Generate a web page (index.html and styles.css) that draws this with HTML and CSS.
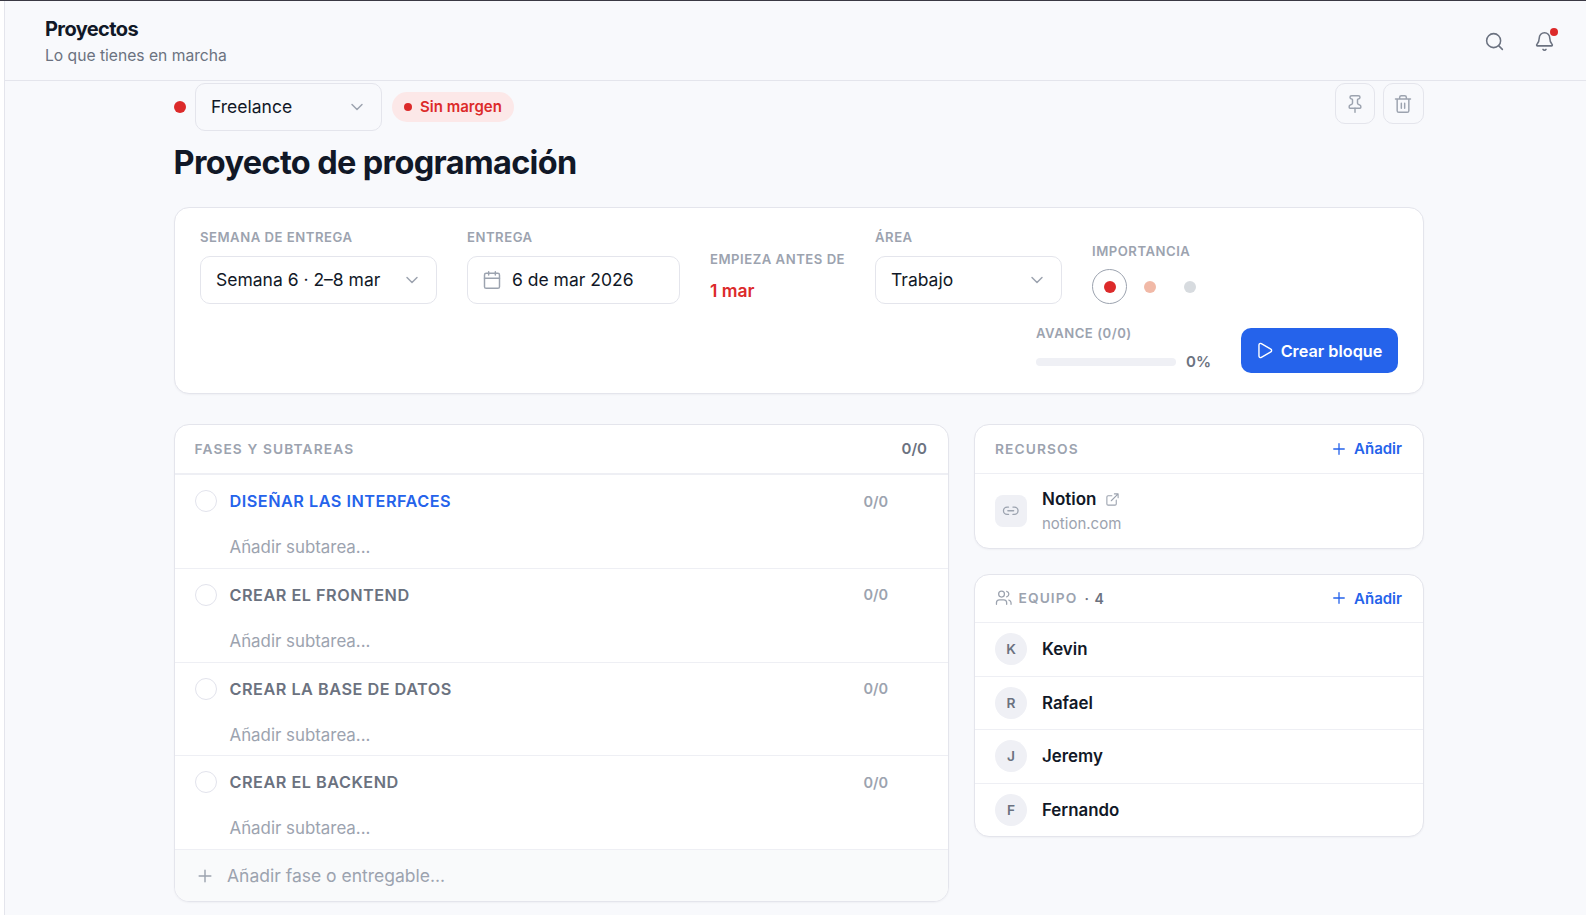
FILE: index.html
```html
<!DOCTYPE html>
<html lang="es">
<head>
    <meta charset="UTF-8">
    <meta name="viewport" content="width=device-width, initial-scale=1.0">
    <title>Proyectos</title>
    <link rel="stylesheet" href="styles.css">
</head>
<body>
    <svg class="sprite" aria-hidden="true">
        <symbol id="chevron" viewBox="0 0 24 24"><path d="m6 9 6 6 6-6"/></symbol>
        <symbol id="plus" viewBox="0 0 24 24"><path d="M5 12h14M12 5v14"/></symbol>
    </svg>

    <div class="app">
        <header class="topbar">
            <div>
                <h1>Proyectos</h1>
                <p>Lo que tienes en marcha</p>
            </div>
            <div class="topbar-actions">
                <button class="icon-button" aria-label="Buscar">
                    <svg class="icon" viewBox="0 0 24 24"><circle cx="11" cy="11" r="8"/><path d="m21 21-4.3-4.3"/></svg>
                </button>
                <button class="icon-button" aria-label="Notificaciones">
                    <svg class="icon" viewBox="0 0 24 24"><path d="M10.268 21a2 2 0 0 0 3.464 0"/><path d="M3.262 15.326A1 1 0 0 0 4 17h16a1 1 0 0 0 .74-1.673C19.41 13.956 18 12.499 18 8A6 6 0 0 0 6 8c0 4.499-1.411 5.956-2.738 7.326"/></svg>
                    <span class="badge"></span>
                </button>
            </div>
        </header>

        <main>
            <div class="project-bar">
                <span class="dot red"></span>
                <button class="select client">Freelance <svg class="icon"><use href="#chevron"/></svg></button>
                <span class="pill">Sin margen</span>
                <div class="project-actions">
                    <button class="square-button" aria-label="Fijar">
                        <svg class="icon" viewBox="0 0 24 24"><path d="M12 17v5"/><path d="M9 10.76a2 2 0 0 1-1.11 1.79l-1.78.9A2 2 0 0 0 5 15.24V16a1 1 0 0 0 1 1h12a1 1 0 0 0 1-1v-.76a2 2 0 0 0-1.11-1.79l-1.78-.9A2 2 0 0 1 15 10.76V7a1 1 0 0 1 1-1 2 2 0 0 0 0-4H8a2 2 0 0 0 0 4 1 1 0 0 1 1 1z"/></svg>
                    </button>
                    <button class="square-button" aria-label="Eliminar">
                        <svg class="icon" viewBox="0 0 24 24"><path d="M3 6h18M19 6v14a2 2 0 0 1-2 2H7a2 2 0 0 1-2-2V6M8 6V4a2 2 0 0 1 2-2h4a2 2 0 0 1 2 2v2M10 11v6M14 11v6"/></svg>
                    </button>
                </div>
            </div>

            <h2>Proyecto de programación</h2>

            <section class="card details">
                <div class="field">
                    <span class="label">Semana de entrega</span>
                    <button class="select week">Semana 6 · 2–8 mar <svg class="icon"><use href="#chevron"/></svg></button>
                </div>
                <div class="field">
                    <span class="label">Entrega</span>
                    <button class="select date">
                        <svg class="icon calendar" viewBox="0 0 24 24"><path d="M8 2v4M16 2v4M3 10h18"/><rect x="3" y="4" width="18" height="18" rx="2"/></svg>
                        6 de mar 2026
                    </button>
                </div>
                <div class="field start">
                    <span class="label">Empieza antes de</span>
                    <strong>1 mar</strong>
                </div>
                <div class="field">
                    <span class="label">Área</span>
                    <button class="select area">Trabajo <svg class="icon"><use href="#chevron"/></svg></button>
                </div>
                <div class="field priority">
                    <span class="label">Importancia</span>
                    <div class="priority-options">
                        <button class="selected" aria-label="Alta"><span class="dot red"></span></button>
                        <button aria-label="Media"><span class="dot peach"></span></button>
                        <button aria-label="Baja"><span class="dot gray"></span></button>
                    </div>
                </div>
                <div class="progress-group">
                    <div class="progress">
                        <span class="label">Avance (0/0)</span>
                        <div class="progress-line"><div class="track"></div><span>0%</span></div>
                    </div>
                    <button class="primary">
                        <svg class="icon" viewBox="0 0 24 24"><path d="M5 5a2 2 0 0 1 3.008-1.728l11.997 6.998a2 2 0 0 1 .003 3.458l-12 7A2 2 0 0 1 5 19z"/></svg>
                        Crear bloque
                    </button>
                </div>
            </section>

            <div class="columns">
                <section class="card phases">
                    <div class="card-header">
                        <h3>Fases y subtareas</h3>
                        <span class="total">0/0</span>
                    </div>
                    <div class="phase active">
                        <div class="phase-row"><span class="check"></span><span class="phase-name">Diseñar las interfaces</span><span class="count">0/0</span></div>
                        <p>Añadir subtarea...</p>
                    </div>
                    <div class="phase">
                        <div class="phase-row"><span class="check"></span><span class="phase-name">Crear el frontend</span><span class="count">0/0</span></div>
                        <p>Añadir subtarea...</p>
                    </div>
                    <div class="phase">
                        <div class="phase-row"><span class="check"></span><span class="phase-name">Crear la base de datos</span><span class="count">0/0</span></div>
                        <p>Añadir subtarea...</p>
                    </div>
                    <div class="phase">
                        <div class="phase-row"><span class="check"></span><span class="phase-name">Crear el backend</span><span class="count">0/0</span></div>
                        <p>Añadir subtarea...</p>
                    </div>
                    <div class="new-phase"><svg class="icon"><use href="#plus"/></svg><span>Añadir fase o entregable...</span></div>
                </section>

                <aside>
                    <section class="card">
                        <div class="card-header">
                            <h3>Recursos</h3>
                            <button class="add"><svg class="icon"><use href="#plus"/></svg>Añadir</button>
                        </div>
                        <div class="resource">
                            <span class="resource-icon"><svg class="icon" viewBox="0 0 24 24"><path d="M9 17H7A5 5 0 0 1 7 7h2M15 7h2a5 5 0 1 1 0 10h-2M8 12h8"/></svg></span>
                            <div>
                                <div class="resource-name">Notion <svg class="icon" viewBox="0 0 24 24"><path d="M15 3h6v6M10 14 21 3M18 13v6a2 2 0 0 1-2 2H5a2 2 0 0 1-2-2V8a2 2 0 0 1 2-2h6"/></svg></div>
                                <div class="resource-url">notion.com</div>
                            </div>
                        </div>
                    </section>

                    <section class="card team">
                        <div class="card-header">
                            <svg class="icon" viewBox="0 0 24 24"><path d="M16 21v-2a4 4 0 0 0-4-4H6a4 4 0 0 0-4 4v2"/><circle cx="9" cy="7" r="4"/><path d="M22 21v-2a4 4 0 0 0-3-3.87M16 3.13a4 4 0 0 1 0 7.75"/></svg>
                            <h3>Equipo</h3>
                            <span class="team-count">· 4</span>
                            <button class="add"><svg class="icon"><use href="#plus"/></svg>Añadir</button>
                        </div>
                        <div class="member"><span class="avatar">K</span>Kevin</div>
                        <div class="member"><span class="avatar">R</span>Rafael</div>
                        <div class="member"><span class="avatar">J</span>Jeremy</div>
                        <div class="member"><span class="avatar">F</span>Fernando</div>
                    </section>
                </aside>
            </div>
        </main>
    </div>
</body>
</html>
```
FILE: styles.css
```css
:root {
    --bg: #f8f9fc;
    --card: #ffffff;
    --text: #111827;
    --text-soft: #6b7280;
    --muted: #9ca3af;
    --border: #e4e5ec;
    --line: #eeeff4;
    --accent: #2563eb;
    --danger: #dc2a2a;
}

* {
    box-sizing: border-box;
}

body {
    margin: 0;
    height: 915px;
    overflow: hidden;
    font-family: 'Inter', sans-serif;
    font-size: 17.5px;
    color: var(--text);
    background-color: var(--card);
    border-top: 1px solid #3a3944;
    padding-left: 4px;
}

h1, h2, h3, p {
    margin: 0;
}

button {
    font: inherit;
    color: inherit;
    background: none;
    border: none;
    padding: 0;
    cursor: pointer;
}

.sprite {
    display: none;
}

.icon {
    display: block;
    width: 20px;
    height: 20px;
    flex: none;
    fill: none;
    stroke: currentColor;
    stroke-width: 1.75;
    stroke-linecap: round;
    stroke-linejoin: round;
}

.app {
    height: 100%;
    background-color: var(--bg);
    border-left: 1px solid var(--border);
}

.topbar {
    display: flex;
    align-items: center;
    justify-content: space-between;
    height: 80px;
    padding: 2px 19px 0 40px;
    border-bottom: 1px solid var(--border);
}

.topbar h1 {
    margin-top: 2px;
    font-size: 20px;
    line-height: 25px;
    font-weight: 700;
    letter-spacing: -0.6px;
}

.topbar p {
    margin-top: 2px;
    font-size: 15.65px;
    line-height: 24px;
    color: var(--text-soft);
}

.topbar-actions {
    display: flex;
    gap: 5px;
    color: var(--text-soft);
}

.icon-button {
    position: relative;
    display: grid;
    place-items: center;
    width: 45px;
    height: 45px;
}

.icon-button .icon {
    width: 21px;
    height: 21px;
}

.badge {
    position: absolute;
    top: 9px;
    right: 9px;
    width: 8px;
    height: 8px;
    border-radius: 50%;
    background-color: var(--danger);
}

main {
    width: 1250px;
    margin-left: 169px;
    padding-top: 2px;
}

.project-bar {
    display: flex;
    align-items: center;
    gap: 10px;
    height: 48px;
}

.dot {
    display: block;
    width: 12px;
    height: 12px;
    border-radius: 50%;
}

.project-bar .dot {
    margin-right: -1px;
}

.red {
    background-color: var(--danger);
}

.peach {
    background-color: #f1b9a7;
}

.gray {
    background-color: #d7dbdf;
}

.select {
    display: flex;
    align-items: center;
    justify-content: space-between;
    height: 48px;
    padding: 0 14px 1px 15px;
    border: 1px solid var(--border);
    border-radius: 10px;
    white-space: nowrap;
}

.select .icon {
    color: var(--muted);
}

.client, .area {
    width: 187px;
}

.week {
    width: 237px;
}

.date {
    width: 213px;
    justify-content: flex-start;
    gap: 10px;
    padding-left: 14px;
}

.pill {
    display: flex;
    align-items: center;
    gap: 8px;
    height: 30px;
    padding: 0 12px 1px;
    border-radius: 15px;
    font-size: 15px;
    font-weight: 600;
    color: var(--danger);
    background-color: #fce8e8;
}

.pill::before {
    content: "";
    width: 8px;
    height: 8px;
    border-radius: 50%;
    background-color: var(--danger);
}

.project-actions {
    display: flex;
    align-self: flex-start;
    gap: 8px;
    margin-left: auto;
}

.square-button {
    display: grid;
    place-items: center;
    width: 40px;
    height: 41px;
    border: 1px solid var(--border);
    border-radius: 10px;
    color: var(--muted);
}

.square-button:last-child {
    width: 41px;
    padding-right: 1px;
}

h2 {
    margin-top: 10px;
    font-size: 32.5px;
    line-height: 43px;
    font-weight: 700;
    letter-spacing: -0.65px;
    text-indent: -0.5px;
}

.card {
    background-color: var(--card);
    border: 1px solid var(--border);
    border-radius: 15px;
    box-shadow: 0 1px 2px rgba(17, 24, 39, 0.04);
    overflow: hidden;
}

.details {
    display: flex;
    flex-wrap: wrap;
    align-items: flex-end;
    gap: 24px 30px;
    margin-top: 23px;
    height: 187px;
    padding: 20px 25px;
}

.label {
    display: block;
    font-size: 13.125px;
    line-height: 18px;
    font-weight: 600;
    letter-spacing: 0.52px;
    text-transform: uppercase;
    white-space: nowrap;
    color: var(--muted);
}

.field .select {
    margin-top: 10px;
}

.start {
    width: 135px;
}

.start strong {
    display: block;
    margin-top: 9px;
    line-height: 27px;
    font-weight: 600;
    color: var(--danger);
}

.priority-options {
    display: flex;
    gap: 5px;
    margin-top: 9px;
}

.priority-options button {
    display: grid;
    place-items: center;
    width: 35px;
    height: 35px;
    border: 1px solid transparent;
    border-radius: 50%;
}

.priority-options .selected {
    border-color: var(--muted);
}

.progress-group {
    display: flex;
    gap: 30px;
    margin-left: auto;
}

.progress {
    margin-top: -4px;
}

.progress-line {
    display: flex;
    align-items: center;
    gap: 10px;
    margin-top: 9px;
    width: 175px;
    font-size: 15px;
    line-height: 22px;
    font-weight: 600;
    color: var(--text-soft);
}

.track {
    flex: none;
    width: 140px;
    height: 8px;
    border-radius: 4px;
    background-color: #eff0f5;
}

.primary {
    display: flex;
    align-items: center;
    justify-content: center;
    gap: 7px;
    width: 157px;
    height: 45px;
    padding-right: 2px;
    border-radius: 10px;
    font-size: 16.25px;
    font-weight: 600;
    color: #fff;
    background-color: var(--accent);
    white-space: nowrap;
}

.primary .icon {
    width: 19px;
    height: 19px;
}

.columns {
    display: grid;
    grid-template-columns: 775px 450px;
    align-items: start;
    gap: 25px;
    margin-top: 30px;
}

.card-header {
    display: flex;
    align-items: center;
    height: 49px;
    padding: 0 21px 1px 20px;
    border-bottom: 1px solid var(--line);
}

.card-header h3 {
    font-size: 13.75px;
    font-weight: 600;
    letter-spacing: 1.1px;
    text-transform: uppercase;
    color: var(--muted);
}

.phases .card-header {
    height: 50px;
    border-bottom-width: 2px;
}

.phases .card-header h3 {
    margin-left: -0.5px;
}

.total {
    margin-left: auto;
    font-size: 15px;
    font-weight: 600;
    color: var(--text-soft);
}

.phase {
    height: 93.75px;
    padding-top: 11px;
    border-bottom: 1px solid var(--line);
}

.phase-row {
    display: flex;
    align-items: center;
    height: 30px;
    padding: 0 60px 0 20px;
}

.check {
    width: 22px;
    height: 22px;
    margin-right: 12.5px;
    border: 1px solid #e2e3ec;
    border-radius: 50%;
}

.phase-name {
    font-size: 16.25px;
    font-weight: 600;
    letter-spacing: 0.5px;
    text-transform: uppercase;
    color: var(--text-soft);
}

.active .phase-name {
    color: var(--accent);
}

.count {
    margin-left: auto;
    font-size: 14.5px;
    font-weight: 600;
    color: var(--muted);
}

.phase p {
    margin: 19px 0 0 54.5px;
    font-size: 16.875px;
    line-height: 24px;
    color: var(--muted);
}

.new-phase {
    display: flex;
    align-items: center;
    gap: 12px;
    height: 51px;
    padding-left: 20px;
    color: var(--muted);
    background-color: #f9fafb;
}

aside {
    display: grid;
    gap: 25px;
}

.add {
    display: flex;
    align-items: center;
    gap: 6px;
    margin-left: auto;
    font-size: 15px;
    font-weight: 600;
    color: var(--accent);
}

.add .icon {
    width: 18px;
    height: 18px;
}

.resource {
    display: flex;
    align-items: center;
    gap: 15px;
    height: 74px;
    padding: 0 20px;
}

.resource-icon {
    display: grid;
    place-items: center;
    width: 32px;
    height: 32px;
    border-radius: 8px;
    color: var(--muted);
    background-color: #eff0f5;
}

.resource-icon .icon {
    width: 17.5px;
    height: 17.5px;
}

.resource-name {
    display: flex;
    align-items: center;
    gap: 9px;
    font-size: 17px;
    line-height: 25px;
    font-weight: 600;
}

.resource-name .icon {
    width: 15px;
    height: 15px;
    color: var(--muted);
}

.resource-url {
    font-size: 15px;
    line-height: 24px;
    color: var(--muted);
}

.team .card-header {
    height: 48px;
}

.team .card-header > .icon {
    width: 17.5px;
    height: 17.5px;
    margin-right: 6px;
    color: var(--muted);
}

.team-count {
    margin-left: 7px;
    font-size: 14px;
    font-weight: 600;
    word-spacing: 2px;
    color: var(--text-soft);
}

.member {
    display: flex;
    align-items: center;
    gap: 15px;
    height: 53.5px;
    padding: 0 20px;
    font-size: 16.875px;
    font-weight: 600;
    border-bottom: 1px solid var(--line);
}

.member:last-child {
    border-bottom: none;
    height: 52.5px;
}

.avatar {
    display: grid;
    place-items: center;
    width: 32px;
    height: 32px;
    border-radius: 50%;
    font-size: 13.75px;
    font-weight: 600;
    color: var(--text-soft);
    background-color: #eff0f5;
}
```
